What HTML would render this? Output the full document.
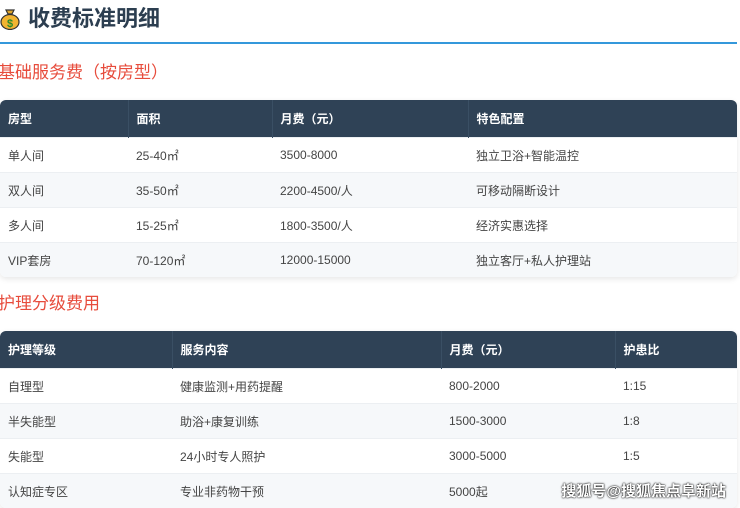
<!DOCTYPE html>
<html><head><meta charset="utf-8"><style>
body{margin:0;width:740px;height:505px;overflow:hidden;background:#fff;font-family:"Liberation Sans","Noto Sans CJK SC",sans-serif;color:#333;position:relative}
h1{position:absolute;left:0;top:4px;margin:0;font-size:22px;font-weight:bold;color:#2c3e50;line-height:30px;display:flex;align-items:center}
.bag{width:20px;height:22px;margin-right:8px;position:relative}
.line{position:absolute;left:0;top:42px;width:737px;height:2px;background:#3498db}
h2{position:absolute;left:-2px;margin:0;font-size:17px;font-weight:normal;color:#e74c3c;line-height:24px}
table{position:absolute;left:0;width:737px;border-collapse:collapse;font-size:12px;border-radius:6px;overflow:hidden;box-shadow:0 2px 6px rgba(0,0,0,.1)}
th{background:#2f4256;color:#fff;text-align:left;font-weight:bold;height:37px;padding:0 0 0 8px;border-left:1px solid #3a4f64}
th:first-child{border-left:none}
td{height:34px;padding:0 0 0 8px;color:#444}
tr:nth-child(odd) td{background:#f6f8fa}
tr td{border-top:1px solid #eceff2}
.wm{position:absolute;right:14px;top:480px;font-size:15px;color:#fff;text-shadow:0 0 2px #000,0 0 1px #000;font-weight:bold;letter-spacing:0}
</style></head><body>
<h1><svg class="bag" viewBox="0 0 20 22"><path d="M6 2h8l-2 4h-4z" fill="#e0a52a" stroke="#333" stroke-width="1.2"/><ellipse cx="10" cy="14" rx="9" ry="7.5" fill="#f2b431" stroke="#333" stroke-width="1.2"/><text x="10" y="19" font-size="11" text-anchor="middle" fill="#2a8a2a" font-weight="bold">$</text></svg>收费标准明细</h1>
<div class="line"></div>
<h2 style="top:61px">基础服务费（按房型）</h2>
<table style="top:100px">
<colgroup><col style="width:128px"><col style="width:144px"><col style="width:196px"><col></colgroup>
<tr><th>房型</th><th>面积</th><th>月费（元）</th><th>特色配置</th></tr>
<tr><td>单人间</td><td>25-40㎡</td><td>3500-8000</td><td>独立卫浴+智能温控</td></tr>
<tr><td>双人间</td><td>35-50㎡</td><td>2200-4500/人</td><td>可移动隔断设计</td></tr>
<tr><td>多人间</td><td>15-25㎡</td><td>1800-3500/人</td><td>经济实惠选择</td></tr>
<tr><td>VIP套房</td><td>70-120㎡</td><td>12000-15000</td><td>独立客厅+私人护理站</td></tr>
</table>
<h2 style="top:292px">护理分级费用</h2>
<table style="top:331px">
<colgroup><col style="width:172px"><col style="width:269px"><col style="width:174px"><col></colgroup>
<tr><th>护理等级</th><th>服务内容</th><th>月费（元）</th><th>护患比</th></tr>
<tr><td>自理型</td><td>健康监测+用药提醒</td><td>800-2000</td><td>1:15</td></tr>
<tr><td>半失能型</td><td>助浴+康复训练</td><td>1500-3000</td><td>1:8</td></tr>
<tr><td>失能型</td><td>24小时专人照护</td><td>3000-5000</td><td>1:5</td></tr>
<tr><td>认知症专区</td><td>专业非药物干预</td><td>5000起</td><td></td></tr>
</table>
<div class="wm">搜狐号@搜狐焦点阜新站</div>
</body></html>
